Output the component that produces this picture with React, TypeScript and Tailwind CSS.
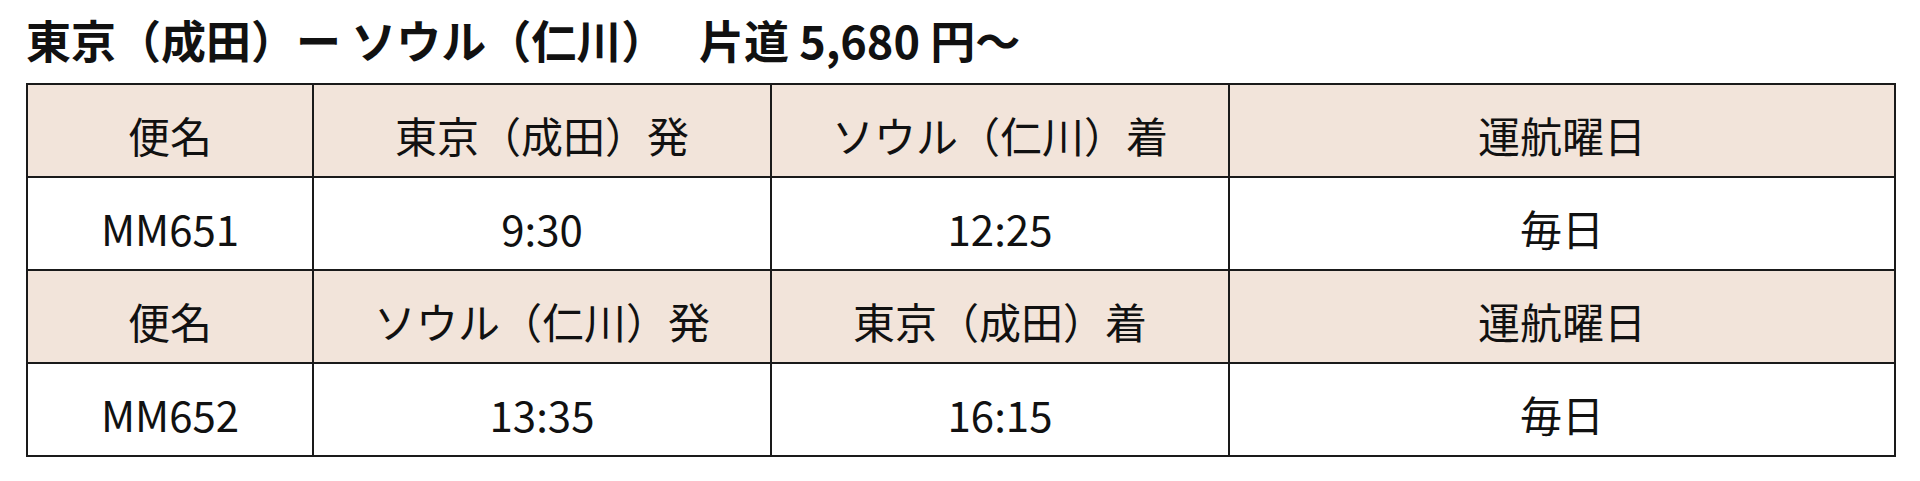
type Row = { head: boolean; cells: string[] };

const rows: Row[] = [
  { head: true, cells: ["便名", "東京（成田）発", "ソウル（仁川）着", "運航曜日"] },
  { head: false, cells: ["MM651", "9:30", "12:25", "毎日"] },
  { head: true, cells: ["便名", "ソウル（仁川）発", "東京（成田）着", "運航曜日"] },
  { head: false, cells: ["MM652", "13:35", "16:15", "毎日"] },
];

export default function App() {
  return (
    <div
      className="w-[1920px] h-[481px] bg-white text-[#111] px-[26px] pt-[10px]"
      style={{ fontFamily: '"Noto Sans CJK JP", "Noto Sans", sans-serif' }}
    >
      {/* タイトル */}
      <h2 className="text-[45px] leading-[60px] font-bold whitespace-pre">
        東京（成田）ー ソウル（仁川）　 片道 5,680 円〜
      </h2>

      {/* 時刻表 */}
      <table className="mt-[13px] w-[1868px] border-collapse table-fixed">
        <colgroup>
          <col className="w-[286px]" />
          <col className="w-[458px]" />
          <col className="w-[458px]" />
          <col className="w-[666px]" />
        </colgroup>
        <tbody>
          {rows.map((row, i) => (
            <tr key={i} className={row.head ? "bg-[#f2e4da]" : "bg-white"}>
              {row.cells.map((c, j) => (
                <td
                  key={j}
                  className="h-[93px] border-2 border-[#1a1a1a] text-center align-middle text-[42px] leading-[1.2] pt-[10px] whitespace-pre"
                >
                  {c}
                </td>
              ))}
            </tr>
          ))}
        </tbody>
      </table>
    </div>
  );
}
